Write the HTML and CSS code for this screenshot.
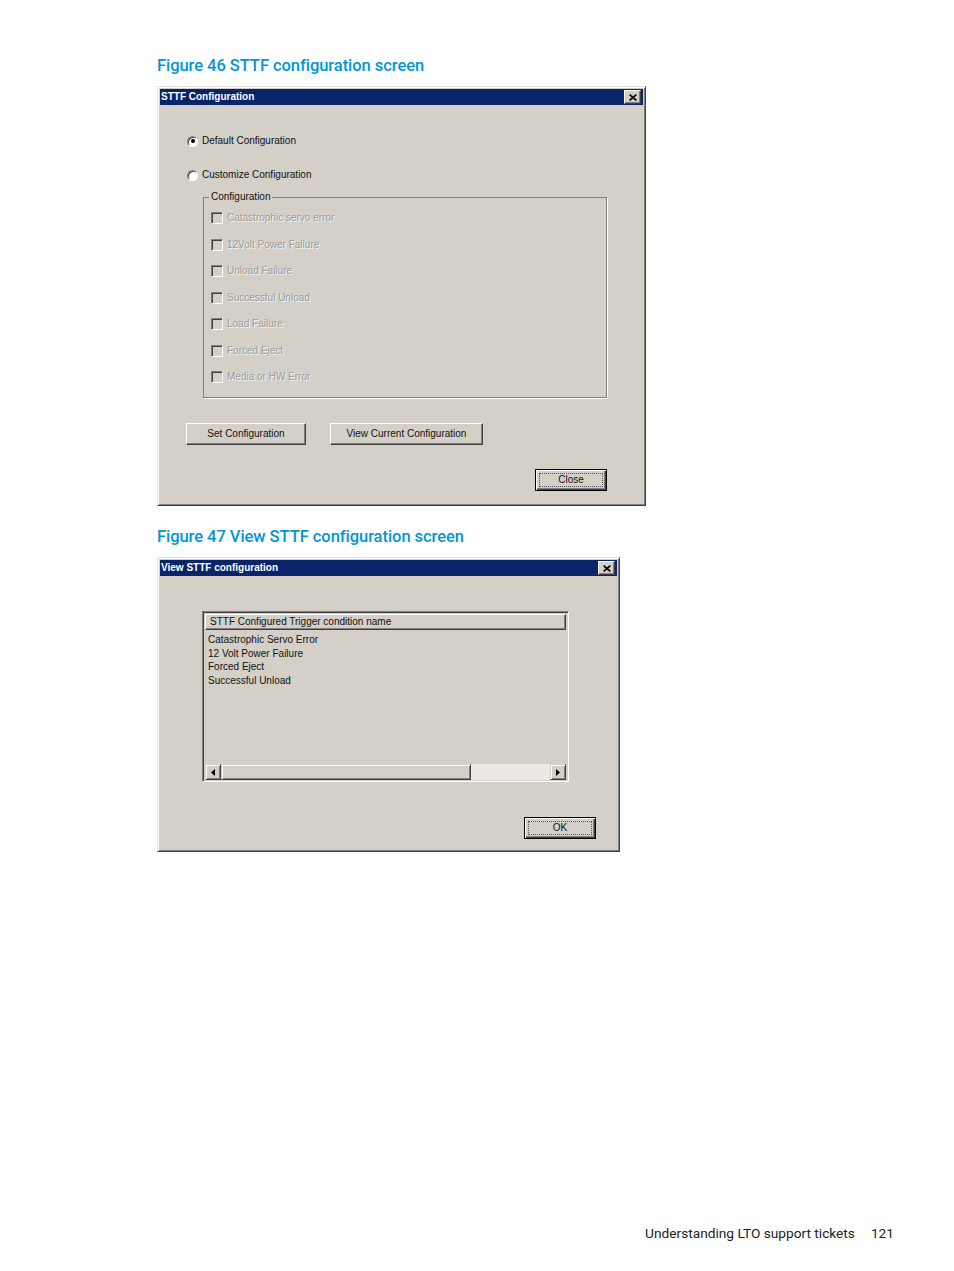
FILE: index.html
```html
<!DOCTYPE html>
<html>
<head>
<meta charset="utf-8">
<title>STTF configuration</title>
<link rel="stylesheet" href="styles.css">
</head>
<body>
<div class="page">
  <h2 class="caption">Figure 46 STTF configuration screen</h2>
  <div class="win win-config">
    <div class="titlebar">
      <span class="title">STTF Configuration</span>
      <span class="xbtn"><svg width="8" height="7" viewBox="0 0 8 7"><path d="M0.6 0.6 L7.4 6.4 M7.4 0.6 L0.6 6.4" stroke="#000" stroke-width="1.7"/></svg></span>
    </div>
    <div class="body body-config">
      <div class="radio-row"><span class="radio checked"></span><span>Default Configuration</span></div>
      <div class="radio-row r2"><span class="radio"></span><span>Customize Configuration</span></div>
      <fieldset class="group">
        <legend>Configuration</legend>
        <div class="chk-row"><span class="chk"></span><span class="dis">Catastrophic servo error</span></div>
        <div class="chk-row"><span class="chk"></span><span class="dis">12Volt Power Failure</span></div>
        <div class="chk-row"><span class="chk"></span><span class="dis">Unload Failure</span></div>
        <div class="chk-row"><span class="chk"></span><span class="dis">Successful Unload</span></div>
        <div class="chk-row"><span class="chk"></span><span class="dis">Load Failure</span></div>
        <div class="chk-row"><span class="chk"></span><span class="dis">Forced Eject</span></div>
        <div class="chk-row"><span class="chk"></span><span class="dis">Media or HW Error</span></div>
      </fieldset>
      <div class="btn-row">
        <span class="btn b-set">Set Configuration</span>
        <span class="btn b-view">View Current Configuration</span>
      </div>
      <div class="end-row">
        <span class="btn default"><span class="focus">Close</span></span>
      </div>
    </div>
  </div>

  <h2 class="caption">Figure 47 View STTF configuration screen</h2>
  <div class="win win-view">
    <div class="titlebar">
      <span class="title">View STTF configuration</span>
      <span class="xbtn"><svg width="8" height="7" viewBox="0 0 8 7"><path d="M0.6 0.6 L7.4 6.4 M7.4 0.6 L0.6 6.4" stroke="#000" stroke-width="1.7"/></svg></span>
    </div>
    <div class="body body-view">
      <div class="listview">
        <div class="lv-header">STTF Configured Trigger condition name</div>
        <div class="lv-rows">
          <div>Catastrophic Servo Error</div>
          <div>12 Volt Power Failure</div>
          <div>Forced Eject</div>
          <div>Successful Unload</div>
        </div>
        <div class="hscroll">
          <span class="sb-btn"><svg width="4" height="7" viewBox="0 0 4 7"><path d="M4 0 L0 3.5 L4 7Z" fill="#000"/></svg></span>
          <span class="sb-thumb"></span>
          <span class="sb-track"></span>
          <span class="sb-btn"><svg width="4" height="7" viewBox="0 0 4 7"><path d="M0 0 L4 3.5 L0 7Z" fill="#000"/></svg></span>
        </div>
      </div>
      <div class="end-row">
        <span class="btn default"><span class="focus">OK</span></span>
      </div>
    </div>
  </div>

  <div class="footer">
    <span>Understanding LTO support tickets</span>
    <span>121</span>
  </div>
</div>
</body>
</html>
```

FILE: styles.css
```css
* { box-sizing: border-box; }
html, body { margin: 0; padding: 0; background: #fff; }

.page {
  min-height: 1271px;
  padding: 55px 0 29px 157px;
  display: flex;
  flex-direction: column;
  align-items: flex-start;
}

.caption {
  margin: 0 0 9px;
  height: 22px;
  font: 500 16.5px/22px Roboto, "Liberation Sans", sans-serif;
  letter-spacing: -0.05px;
  color: #0096d6;
}

.win {
  background: #d4d0c8;
  border: 1px solid;
  border-color: #e4e2dc #404040 #404040 #e4e2dc;
  box-shadow: inset 1px 1px #fff, inset -1px -1px #808080;
  padding: 2px;
  margin-bottom: 20px;
}
.win-config { width: 489px; }
.win-view { width: 463px; }

.titlebar {
  height: 16px;
  background: #0a246a;
  display: flex;
  align-items: center;
  justify-content: space-between;
  padding: 0 2px 0 1px;
}
.title {
  color: #fff;
  font: bold 10px/16px "Liberation Sans", sans-serif;
}
.xbtn {
  width: 17px;
  height: 14px;
  background: #d4d0c8;
  border: 1px solid;
  border-color: #fff #404040 #404040 #fff;
  box-shadow: inset -1px -1px #808080;
  display: flex;
  align-items: center;
  justify-content: center;
}

.body {
  font: 10px/14px "Liberation Sans", sans-serif;
  color: #111;
  display: flex;
  flex-direction: column;
  align-items: flex-start;
}
.body-config { padding: 29px 36px 12px 27px; }

.radio-row {
  height: 14px;
  display: flex;
  align-items: center;
  gap: 4px;
}
.radio-row.r2 { margin-top: 20px; }
.radio {
  width: 11px;
  height: 11px;
  border-radius: 50%;
  background: #fff;
  border: 1px solid;
  border-color: #808080 #fff #fff #808080;
  box-shadow: inset 1px 1px #404040;
  display: flex;
  align-items: center;
  justify-content: center;
}
.radio.checked::after {
  content: "";
  width: 4px;
  height: 4px;
  border-radius: 50%;
  background: #000;
}

.group {
  margin: 9px 0 0 16px;
  width: 404px;
  border: 1px solid #808080;
  box-shadow: 1px 1px 0 #fff;
  padding: 2px 0 6.5px 7px;
  min-inline-size: 0;
}
.group legend {
  margin-left: -2px;
  padding: 0 2px;
  font: 10px/12px "Liberation Sans", sans-serif;
  color: #111;
}
.chk-row {
  height: 26.5px;
  display: flex;
  align-items: center;
  gap: 4px;
}
.chk {
  width: 12px;
  height: 12px;
  background: #d4d0c8;
  border: 1px solid;
  border-color: #808080 #fff #fff #808080;
  box-shadow: inset 1px 1px #404040;
}
.dis {
  color: #9a9a9a;
  text-shadow: 1px 1px 0 #f4f4f4;
}

.btn {
  height: 22px;
  border: 1px solid;
  border-color: #fff #404040 #404040 #fff;
  box-shadow: inset -1px -1px #808080;
  display: flex;
  align-items: center;
  justify-content: center;
  color: #111;
}
.btn-row {
  margin: 25px 0 0 -1px;
  display: flex;
  gap: 24px;
}
.b-set { width: 120px; }
.b-view { width: 153px; }

.end-row {
  align-self: stretch;
  display: flex;
  justify-content: flex-end;
  margin-top: 24px;
}
.btn.default {
  width: 72px;
  border: 1px solid #000;
  box-shadow: inset 1px 1px #fff, inset -1px -1px #404040, inset -2px -2px #808080;
  padding: 3px;
}
.focus {
  flex: 1;
  align-self: stretch;
  border: 1px dotted #555;
  display: flex;
  align-items: center;
  justify-content: center;
}

.body-view { padding: 35px 21px 10px 42px; }
.body-view .end-row { margin-top: 35px; }

.listview {
  width: 367px;
  height: 171px;
  border: 1px solid;
  border-color: #808080 #fff #fff #808080;
  box-shadow: inset 1px 1px #404040, inset -1px -1px #d4d0c8;
  padding: 2px 2px 1px 2px;
  display: flex;
  flex-direction: column;
}
.lv-header {
  height: 16px;
  border: 1px solid;
  border-color: #fff #404040 #404040 #fff;
  box-shadow: inset -1px -1px #808080;
  padding-left: 4px;
  line-height: 14px;
  color: #111;
}
.lv-rows {
  flex: 1;
  padding: 3px 0 0 3px;
  line-height: 13.5px;
  color: #111;
}
.hscroll {
  height: 16px;
  display: flex;
}
.sb-btn {
  width: 16px;
  height: 16px;
  border: 1px solid;
  border-color: #d4d0c8 #404040 #404040 #d4d0c8;
  box-shadow: inset 1px 1px #fff, inset -1px -1px #808080;
  display: flex;
  align-items: center;
  justify-content: center;
}
.sb-thumb {
  width: 250px;
  border: 1px solid;
  border-color: #d4d0c8 #404040 #404040 #d4d0c8;
  box-shadow: inset 1px 1px #fff, inset -1px -1px #808080;
}
.sb-track {
  flex: 1;
  background: #ebe9e5;
}

.footer {
  margin-top: auto;
  align-self: stretch;
  display: flex;
  justify-content: flex-end;
  gap: 16px;
  padding-right: 60px;
  font: 400 13.7px/18px Roboto, "Liberation Sans", sans-serif;
  color: #222;
}
```
